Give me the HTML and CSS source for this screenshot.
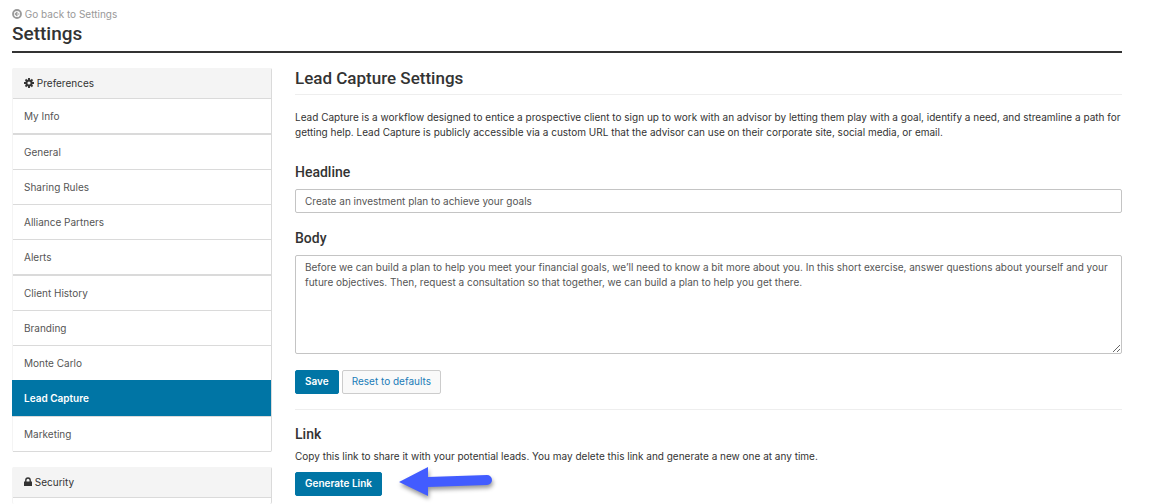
FILE: index.html
```html
<!DOCTYPE html>
<html lang="en">
<head>
  <meta charset="UTF-8">
  <title>Lead Capture Settings</title>
  <meta name="viewport" content="width=device-width, initial-scale=1.0">
  <link rel="stylesheet" href="styles.css">
</head>
<body>
  <header class="page-header">
    <a class="back" href="#">
      <svg class="icon" viewBox="0 0 10 10" width="10" height="10" aria-hidden="true">
        <circle cx="5" cy="5" r="4" fill="none" stroke="currentColor" stroke-width="1.8"/>
        <path d="M5.4 2.8L3.2 5l2.2 2.2M3.4 5H7.4" fill="none" stroke="currentColor" stroke-width="1.2"/>
      </svg>
      Go back to Settings
    </a>
    <h1>Settings</h1>
  </header>

  <div class="layout">
    <nav class="sidebar">
      <section class="card">
        <h2 class="card-title">
          <svg class="icon" viewBox="0 0 10 10" width="10" height="10" aria-hidden="true">
            <circle cx="5" cy="5" r="2.6" fill="none" stroke="currentColor" stroke-width="2"/>
            <path d="M5 0v2M5 8v2M0 5h2M8 5h2M1.5 1.5l1.4 1.4M7.1 7.1l1.4 1.4M8.5 1.5L7.1 2.9M2.9 7.1L1.5 8.5" stroke="currentColor" stroke-width="1.9"/>
          </svg>
          Preferences
        </h2>
        <ul>
          <li class="group-end"><a href="#">My Info</a></li>
          <li><a href="#">General</a></li>
          <li><a href="#">Sharing Rules</a></li>
          <li><a href="#">Alliance Partners</a></li>
          <li class="group-end"><a href="#">Alerts</a></li>
          <li><a href="#">Client History</a></li>
          <li><a href="#">Branding</a></li>
          <li><a href="#">Monte Carlo</a></li>
          <li class="active"><a href="#" aria-current="page">Lead Capture</a></li>
          <li><a href="#">Marketing</a></li>
        </ul>
      </section>
      <section class="card card-fill">
        <h2 class="card-title">
          <svg class="icon" viewBox="0 0 8 10" width="8" height="10" aria-hidden="true">
            <path d="M0 4.5h8V9H0z" fill="currentColor"/>
            <path d="M1.8 5V3.2a2.2 2.2 0 0 1 4.4 0V5" fill="none" stroke="currentColor" stroke-width="1.4"/>
          </svg>
          Security
        </h2>
      </section>
    </nav>

    <main class="content">
      <h2 class="content-title">Lead Capture Settings</h2>
      <p class="intro">Lead Capture is a workflow designed to entice a prospective client to sign up to work with an advisor by letting them play with a goal, identify a need, and streamline a path for getting help. Lead Capture is publicly accessible via a custom URL that the advisor can use on their corporate site, social media, or email.</p>

      <form>
        <label for="headline">Headline</label>
        <input type="text" id="headline" value="Create an investment plan to achieve your goals">
        <label for="body">Body</label>
        <textarea id="body">Before we can build a plan to help you meet your financial goals, we’ll need to know a bit more about you. In this short exercise, answer questions about yourself and your future objectives. Then, request a consultation so that together, we can build a plan to help you get there.</textarea>
        <div class="actions">
          <button type="submit" class="btn btn-primary">Save</button>
          <button type="reset" class="btn">Reset to defaults</button>
        </div>
      </form>

      <section class="link">
        <h3>Link</h3>
        <p>Copy this link to share it with your potential leads. You may delete this link and generate a new one at any time.</p>
        <div class="generate">
          <button type="button" class="btn btn-primary">Generate Link</button>
          <svg class="arrow" viewBox="0 0 102 38" width="102" height="38" aria-hidden="true">
            <path d="M1 16L30 1V11L89 9a5 5 0 0 1 0 10L30 21V30z" fill="#425cff"/>
          </svg>
        </div>
      </section>
    </main>
  </div>
</body>
</html>
```
FILE: styles.css
```css
* {
  box-sizing: border-box;
}
body {
  display: flex;
  flex-direction: column;
  min-height: 100vh;
  margin: 0;
  padding: 7px 29px 0 12px;
  background: #fff;
  color: #333;
  font: 10px/15px Inter, Arial, sans-serif;
}
h1, h2, h3, p, ul {
  margin: 0;
  padding: 0;
}
h1, h3, label, .content-title {
  font-family: Roboto, sans-serif;
  font-weight: 500;
}
a {
  color: inherit;
  text-decoration: none;
}
.icon {
  vertical-align: -1px;
}
.page-header {
  border-bottom: 2px solid #333;
}
.back {
  display: block;
  color: #999;
}
h1 {
  padding-bottom: 5px;
  font-size: 19px;
  line-height: 24px;
}

.layout {
  display: flex;
  flex: 1;
  gap: 23px;
  padding-top: 15px;
}
.sidebar {
  display: flex;
  flex-direction: column;
  flex: 0 0 260px;
  gap: 15px;
}
.card {
  border-right: 1px solid #dadada;
  border-left: 1px solid #f4f4f4;
  border-radius: 2px;
}
.card-fill {
  flex: 1;
}
.card-title {
  padding: 8px 11px 7px;
  border-bottom: 1px solid #dadada;
  background: #f4f4f4;
  font-size: 10px;
  font-weight: normal;
}
.card ul {
  list-style: none;
}
.card li {
  border-bottom: 1px solid #dadada;
}
.card li a {
  display: block;
  padding: 10px 11px 9px;
  color: #555;
}
.card .group-end {
  border-bottom-width: 2px;
}
.card .active {
  margin: -1px 0 0 -1px;
}
.card .active a {
  padding: 11px 12px 10px;
  background: #0075a5;
  color: #fff;
  font-weight: 600;
}

.content {
  flex: 1;
  min-width: 0;
}
.content-title {
  padding-bottom: 6px;
  border-bottom: 1px solid #eee;
  font-size: 17px;
  line-height: 20px;
}
.intro {
  margin: 15px 0 20px;
}
label, h3 {
  display: block;
  font-size: 14px;
  line-height: 24px;
}
label {
  margin-bottom: 5px;
}
input, textarea {
  display: block;
  width: 100%;
  padding: 4px 9px;
  border: 1px solid #c4c4c4;
  border-radius: 2px;
  background: #fff;
  color: #555;
  font: inherit;
}
input {
  height: 24px;
  margin-bottom: 13px;
}
textarea {
  height: 99px;
  resize: both;
}
.actions {
  display: flex;
  gap: 3px;
  padding: 16px 0 15px;
  border-bottom: 1px solid #eee;
}
.btn {
  height: 24px;
  padding: 0 9px 1px;
  border: 1px solid #ccc;
  border-radius: 2px;
  background: #f9f9f9;
  color: #1a7cb8;
  font: inherit;
  cursor: pointer;
}
.btn-primary {
  border-color: #0075a5;
  background: #0075a5;
  color: #fff;
  font-weight: 600;
}
.link {
  padding-top: 12px;
}
.link p {
  margin: 3px 0 8px;
}
/* the arrow lies beside the button without making its row taller */
.generate {
  position: relative;
  width: max-content;
}
.arrow {
  position: absolute;
  top: -6px;
  left: 100%;
  margin-left: 16px;
  filter: drop-shadow(1px 3px 2px rgba(0, 0, 0, 0.4));
}
```
